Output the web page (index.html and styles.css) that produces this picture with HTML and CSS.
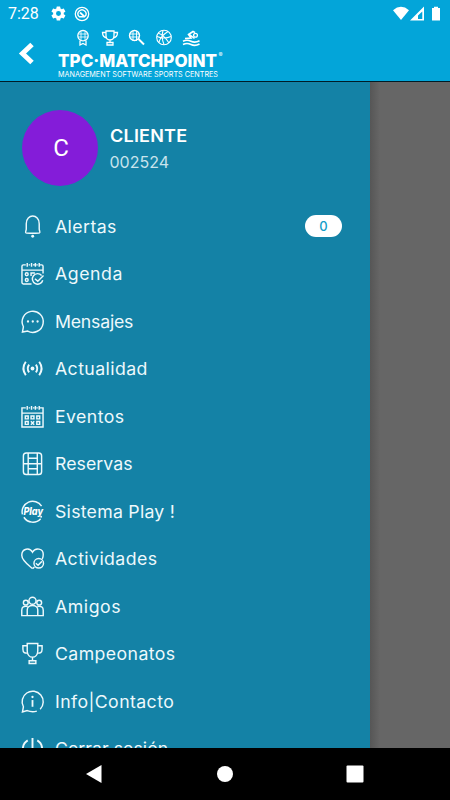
FILE: index.html
```
<!DOCTYPE html>
<html lang="es">
<head>
<meta charset="utf-8">
<meta name="viewport" content="width=device-width">
<title>TPC Matchpoint</title>
<link rel="stylesheet" href="styles.css">
</head>
<body>
<div class="screen">
  <header class="header">
    <div class="status">
      <span class="time">7:28</span>
      <svg class="gear" viewBox="0 0 24 24" width="17" height="17"><path fill="#fff" fill-rule="evenodd" d="M19.4 13a7.500 7.500 0 0 0 0-2l2.100-1.600a.5.5 0 0 0 .1-.6l-2-3.500a.5.5 0 0 0-.6-.2l-2.500 1a7.300 7.300 0 0 0-1.700-1L14.400 2.400a.5.5 0 0 0-.5-.4h-4a.5.5 0 0 0-.5.400L9 5.100a7.700 7.700 0 0 0-1.700 1l-2.500-1a.5.5 0 0 0-.6.200l-2 3.500a.5.500 0 0 0 .1.600L4.500 11a8 8 0 0 0 0 2l-2.200 1.600a.5.500 0 0 0-.1.600l2 3.500c.1.200.4.300.6.200l2.500-1a7.300 7.300 0 0 0 1.700 1l.4 2.700c0 .2.200.4.500.4h4c.300 0 .5-.2.500-.4l.4-2.700a7.700 7.700 0 0 0 1.700-1l2.500 1c.2.100.5 0 .6-.2l2-3.500a.5.500 0 0 0-.1-.6zM12 15.500a3.500 3.500 0 1 1 0-7 3.500 3.500 0 0 1 0 7z"/></svg>
      <svg class="badge-icon" viewBox="0 0 16 16" width="16" height="16" fill="none" stroke="#fff"><circle cx="8" cy="8" r="6.700" stroke-width="1.300"/><path d="M4.900 10.500a4 4 0 1 1 6.200 0M5 10.700h6" stroke-width="1.400"/><path d="M6 6.500l4.500 4.200" stroke-width="1.800"/></svg>
      <svg class="signals" viewBox="0 0 49 16" width="49" height="16"><path fill="#fff" d="M0 4.200Q8 -2.500 16 4.200L8 14z"/><path fill="#fff" fill-rule="evenodd" d="M17 14.500L31 .5v14zM25 12.900h4.300V5.500L25 9.500z"/><path fill="#fff" d="M39 2h2V.8h4V2h2v12.500h-8z"/></svg>
    </div>
    <div class="brandbar">
      <svg class="back" viewBox="0 0 16 24" width="16" height="24"><path d="M14 2.500L4.500 11.500L14 20.500" fill="none" stroke="#fff" stroke-width="5"/></svg>
      <svg class="logo" viewBox="0 0 170 50" width="170" height="50" fill="none" stroke="#fff">
        <g stroke-width="1.300"><circle cx="25" cy="6.700" r="5.200"/><path d="M20.500 5h9M20 8h10M23 2.500v9M27 2.500v9" stroke-width=".8"/><path d="M22 11.500v4.500l3-1.500 3 1.500v-4.500"/></g>
        <g stroke-width="1.300"><path d="M48 2h8v4.500c0 6-8 6-8 0zM48 3.500h-3.500c0 4 1.500 5 4.500 5.500M56 3.500h3.500c0 4-1.500 5-4.500 5.500M52 11v3M49 13.500h6v2.500h-6z"/></g>
        <g><circle cx="76.500" cy="6.500" r="5" stroke-width="1.400"/><path d="M72 5h9M72 8h9M75 2v10M78.500 2v10" stroke-width=".9"/><path d="M80.500 10l5.500 5.500" stroke-width="2"/></g>
        <g stroke-width="1.100"><circle cx="106" cy="8.500" r="7.300"/><path d="M99 7.500q7 3 14 0M105 1.500q-2 7 1 14M100 4q6 2 11 10M101 13.500q1-6 9-11"/></g>
        <g stroke-width="1.600"><path d="M125 12.200q4-2 8 0t8.500-.5M125 15.500q4-2 8 0t8.500-.5"/><path d="M127 9.500l6-.5-2.500-3.500 4.500-3 2 1M131.500 5.500l5 4"/><circle cx="137.500" cy="6.300" r="1.900" stroke-width="1.300"/></g>
        <g fill="#fff" stroke="none"><text class="word" x="0" y="37.500" textLength="159" lengthAdjust="spacingAndGlyphs">TPC·MATCHPOINT</text><text class="tag" x="0" y="47.600" textLength="160" lengthAdjust="spacingAndGlyphs">MANAGEMENT SOFTWARE SPORTS CENTRES</text><text class="reg" x="160.500" y="27.500">®</text></g>
      </svg>
    </div>
  </header>
  <main class="content">
    <nav class="drawer">
      <div class="profile">
        <div class="avatar">C</div>
        <div class="person"><div class="name">CLIENTE</div><div class="number">002524</div></div>
      </div>
      <ul class="menu">
        <li><svg viewBox="0 0 24 24"><path d="M5.200 18.600C4 18 5.500 16.500 5.500 14.500V9c0-10.500 13.500-10.500 13.500 0v5.500c0 2 1.500 3.500.3 4.100-1.300.6-12.800.6-14.100 0z"/><circle cx="12.200" cy="22.200" r="1.500" class="solid"/></svg><span>Alertas</span><b class="count">0</b></li>
        <li><svg viewBox="0 0 24 24"><path d="M11 23H2.500Q1 23 1 21.500V4.500Q1 3 2.500 3H5M19.500 3h2Q23 3 23 4.500V12M1 8.500h22M8 3h1.500M12.500 3h2M16 3h1.500M6.500 1v4M11 1v4M15 1v4M19 1v4"/><circle cx="6" cy="12.800" r="1.500"/><circle cx="6" cy="18.800" r="1.500"/><path d="M10.500 14.500v-3h4M21.500 14a5.500 5.500 0 1 0 1.200 5M14.500 17.500l3 2.500 6-6"/></svg><span>Agenda</span></li>
        <li><svg viewBox="0 0 24 24"><path d="M1.500 23l1-5.500A11 11 0 1 1 7 22z"/><g class="solid"><circle cx="7.300" cy="12" r="1.200"/><circle cx="12.300" cy="12" r="1.200"/><circle cx="17.300" cy="12" r="1.200"/></g></svg><span>Mensajes</span></li>
        <li><svg viewBox="0 0 24 24"><g stroke-width="2"><path d="M5 5q-5 7 0 14M8.500 8q-3 4 0 8M19 5q5 7 0 14M15.500 8q3 4 0 8"/></g><circle cx="12" cy="12" r="2" class="solid"/></svg><span>Actualidad</span></li>
        <li><svg viewBox="0 0 24 24"><path d="M5 3H1v20h22V3h-3.500M1 8.500h22M8 3h1.500M12.500 3h1.500M16 3h1.500M6.500 1v4M11 1v4M15 1v4M19 1v4"/><path d="M4.500 11.500h3v3h-3zM10.500 11.500h3v3h-3zM16.500 11.500h3v3h-3zM4.500 17.200h3v3h-3zM16.500 17.200h3v3h-3zM10.300 17l3.500 3.500M13.800 17l-3.500 3.500"/></svg><span>Eventos</span></li>
        <li><svg viewBox="0 0 24 24"><rect x="2.500" y="1" width="19" height="22.500" rx="3"/><path d="M7.500 1v22M17 1v22M2.500 12.300h19M7.500 6.500H17M7.500 17.500H17"/></svg><span>Reservas</span></li>
        <li><svg viewBox="0 0 24 24"><path d="M21.500 6.500A11 11 0 0 0 1.500 15M3 18a11 11 0 0 0 17.500 1.500"/><text class="play" x="2.500" y="15.500" textLength="20.500" lengthAdjust="spacingAndGlyphs">Play</text><circle cx="21" cy="17.500" r="1" class="solid"/></svg><span>Sistema Play !</span></li>
        <li><svg viewBox="0 0 24 24"><path d="M12 22.500C8 19 .8 14 .8 8.500.8 1.500 9 0 12 5.500 15 0 23.500 1.500 23.200 8q0 2-1 4.500"/><circle cx="18.500" cy="17" r="5"/><path d="M15.500 17l2.300 2 4-4M12 22.500l2-1.500"/></svg><span>Actividades</span></li>
        <li><svg viewBox="0 0 24 24"><circle cx="12" cy="6" r="3.700"/><circle cx="5" cy="8" r="2.500"/><circle cx="19" cy="8" r="2.500"/><path d="M6.500 21.500v-6c0-6 11-6 11 0v6zM6.500 21.500H.8V16c0-4 2-4.500 6.200-4M17.500 21.500h5.700V16c0-4-2-4.500-6.200-4"/></svg><span>Amigos</span></li>
        <li><svg viewBox="0 0 24 24"><path d="M6.500 1.500h11V9c0 9-11 9-11 0zM6.500 4H2v3.500C2 11 4 12 7.500 11.500M17.500 4H22v3.500c0 3.500-2 4.500-5.500 4M12 15.500v4M8.500 19.500h7V22.500h-7z"/></svg><span>Campeonatos</span></li>
        <li><svg viewBox="0 0 24 24"><path d="M20 20A11 11 0 1 0 2.500 17.500L1.500 23l5-1.500q5 2 10 .5"/><path d="M12 10.500v7" stroke-width="1.900"/><circle cx="12" cy="7.300" r="1.200" class="solid"/></svg><span>Info|Contacto</span></li>
        <li><svg viewBox="0 0 24 24"><path d="M7 3.500a10 10 0 1 0 10 0M12 1v11" stroke-width="2"/></svg><span>Cerrar sesión</span></li>
      </ul>
    </nav>
    <div class="scrim"></div>
  </main>
  <footer class="navigation">
    <svg viewBox="0 0 18 20" width="18" height="20"><path d="M1 10L16.500 1v18z"/></svg>
    <svg viewBox="0 0 18 18" width="18" height="18"><circle cx="9" cy="9" r="8"/></svg>
    <svg viewBox="0 0 18 18" width="18" height="18"><rect x=".5" y=".5" width="17" height="17" rx="1"/></svg>
  </footer>
</div>
</body>
</html>
```
FILE: styles.css
```
* { box-sizing: border-box; }
body { margin: 0; font-family: Inter, "Liberation Sans", sans-serif; color: #fff; }
.screen { width: 450px; height: 800px; display: flex; flex-direction: column; overflow: hidden; background: #000; }
.header { height: 82px; flex: none; background: #03a5d9; border-bottom: 1px solid #001c26; }
.status { height: 27px; display: flex; align-items: center; padding: 0 8px; }
.time { font: 16px/20px Roboto, sans-serif; width: 42px; }
.badge-icon { margin-left: 7px; }
.signals { margin-left: auto; }
.brandbar { display: flex; padding: 2px 0 0 18px; }
.back { margin-top: 13px; }
.logo { margin-left: 24px; }
.word { font: 800 17.500px Inter; }
.tag { font: 400 7.500px Inter; }
.reg { font: 6px Inter; }
.content { height: 666px; flex: none; display: flex; overflow: hidden; }
.drawer { width: 369.500px; flex: none; background: #1482a6; }
.scrim { flex: 1; background: linear-gradient(90deg, #565656, #666 10px); }
.profile { display: flex; align-items: center; height: 120px; padding: 11px 0 0 22px; }
.avatar { width: 76px; height: 76px; border-radius: 50%; background: #841cd9; display: flex; align-items: center; justify-content: center; font: 24px Roboto, sans-serif; padding: 1px 0 0 2px; }
.person { margin: 2px 0 0 11.500px; }
.name, .number { transform-origin: left center; }
.name { font-size: 17px; line-height: 26px; font-weight: 600; letter-spacing: .2px; transform: scaleX(1.06); }
.number { font-size: 16px; line-height: 26px; color: #c9e4ed; }
.menu { list-style: none; margin: 0; padding: 1px 27.500px 0 21px; }
.menu li { display: flex; align-items: center; height: 47.500px; font-size: 17px; letter-spacing: .4px; color: #eef9fc; white-space: nowrap; }
.menu span { transform: scaleX(1.04); transform-origin: left center; }
.menu li:nth-child(2), .menu li:nth-child(9) { letter-spacing: .55px; }
.menu li:nth-child(3) { letter-spacing: -.2px; }
.menu li:nth-child(6), .menu li:nth-child(12) { letter-spacing: .05px; }
.menu li:nth-child(7) { letter-spacing: .25px; }
.menu svg { width: 23px; height: 23px; flex: none; fill: none; stroke: #eef9fc; stroke-width: 1.500; margin-right: 11px; overflow: visible; position: relative; top: -.5px; }
.menu .solid { fill: #eef9fc; stroke: none; }
.menu .play { font: italic 800 10.500px Inter; fill: #fff; stroke: none; letter-spacing: 0; }
.count { margin-left: auto; width: 37px; height: 22px; border-radius: 11px; background: #fff; color: #159dc8; font-size: 13px; line-height: 22px; font-weight: 500; text-align: center; letter-spacing: 0; position: relative; top: -1px; }
.navigation { height: 52px; flex: none; display: flex; align-items: center; justify-content: space-between; padding: 0 86px 0 85px; background: #000; }
.navigation svg { fill: #fff; }
```
